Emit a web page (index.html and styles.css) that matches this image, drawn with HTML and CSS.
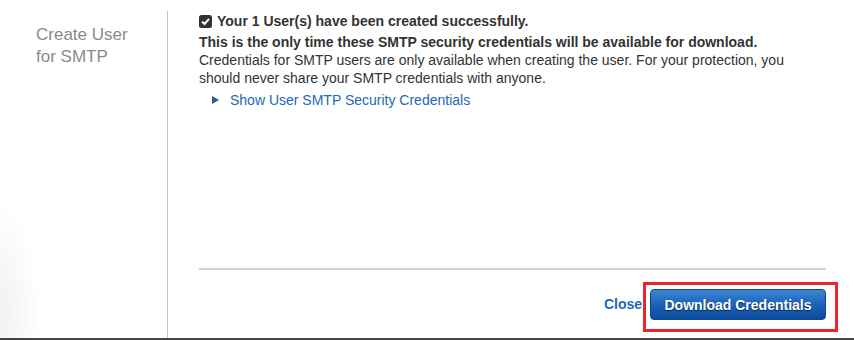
FILE: index.html
```html
<!DOCTYPE html>
<html lang="en">
<head>
    <meta charset="UTF-8">
    <title>Create User for SMTP</title>
    <link rel="stylesheet" href="styles.css">
</head>
<body>
    <div class="wizard">
        <div class="step-label">Create User<br>for SMTP</div>

        <div class="step-body">
            <div class="message">
                <div class="success-line">
                    <svg class="check-icon" width="13" height="13" viewBox="0 0 13 13">
                        <rect x="0" y="0" width="13" height="13" rx="2.5" fill="#333"></rect>
                        <path d="M3 6.6 L5.5 9 L10 3.9" stroke="#fff" stroke-width="2" fill="none"></path>
                    </svg>
                    Your 1 User(s) have been created successfully.
                </div>
                <div class="warning-line">This is the only time these SMTP security credentials will be available for download.</div>
                <p class="note">Credentials for SMTP users are only available when creating the user. For your protection, you should never share your SMTP credentials with anyone.</p>
                <a href="#" class="toggle-link"><span class="caret"></span>Show User SMTP Security Credentials</a>
            </div>

            <div class="footer">
                <a href="#" class="close-link">Close</a>
                <div class="highlight">
                    <button class="download-btn">Download Credentials</button>
                </div>
            </div>
        </div>
    </div>
    <div class="bottom-bar"></div>
</body>
</html>
```

FILE: styles.css
```css
body {
    margin: 0;
    font-family: 'Liberation Sans', Arial, Helvetica, sans-serif;
    color: #333;
    background: #fff;
    height: 340px;
    overflow: hidden;
    position: relative;
}

/* faint shadow at the lower left edge */
body::before {
    content: '';
    position: absolute;
    left: 0;
    top: 200px;
    width: 40px;
    height: 140px;
    background: radial-gradient(ellipse at 0% 80%, rgba(0, 0, 0, 0.06), rgba(0, 0, 0, 0) 70%);
}

.wizard {
    display: flex;
    height: 338px;
}

.step-label {
    width: 131px;
    flex-shrink: 0;
    padding: 24px 0 0 36px;
    font-size: 17px;
    line-height: 22px;
    color: #8a8a8a;
}

.step-body {
    flex: 1;
    margin-top: 11px;
    border-left: 1px solid #c4c4c4;
    padding: 0 28px 0 31px;
    display: flex;
    flex-direction: column;
    justify-content: space-between;
}

.message {
    font-size: 14px;
    line-height: 18px;
}

.success-line {
    font-weight: bold;
    display: flex;
    align-items: center;
    margin-top: 1px;
}

.check-icon {
    margin-right: 5px;
}

.warning-line {
    font-weight: bold;
    margin-top: 3px;
}

.note {
    margin: 0;
}

.toggle-link {
    display: inline-flex;
    align-items: center;
    margin: 4px 0 0 13px;
    color: #1b6ab4;
    text-decoration: none;
}

.caret {
    width: 0;
    height: 0;
    border-top: 4.5px solid transparent;
    border-bottom: 4.5px solid transparent;
    border-left: 7px solid #2a5d8f;
    margin-right: 11px;
}

.footer {
    border-top: 2px solid #d2d2d2;
    display: flex;
    justify-content: flex-end;
    align-items: center;
    padding: 12px 0 6px;
}

.close-link {
    color: #1b6ab4;
    font-weight: bold;
    font-size: 14px;
    text-decoration: none;
    margin: 0 1px 6px 0;
}

.highlight {
    border: 3px solid #e8262b;
    padding: 4px 9px 9px 4px;
    margin-right: -12px;
}

.download-btn {
    display: block;
    width: 176px;
    height: 31px;
    border: 1px solid #0a4792;
    border-radius: 4px;
    background: linear-gradient(#3a86d6, #1c62b7 50%, #0b4c9d);
    color: #fff;
    font-family: inherit;
    font-size: 14px;
    font-weight: bold;
    text-shadow: 0 1px 1px rgba(0, 0, 0, 0.6);
    cursor: pointer;
}

.bottom-bar {
    height: 2px;
    background: #444;
}
```
